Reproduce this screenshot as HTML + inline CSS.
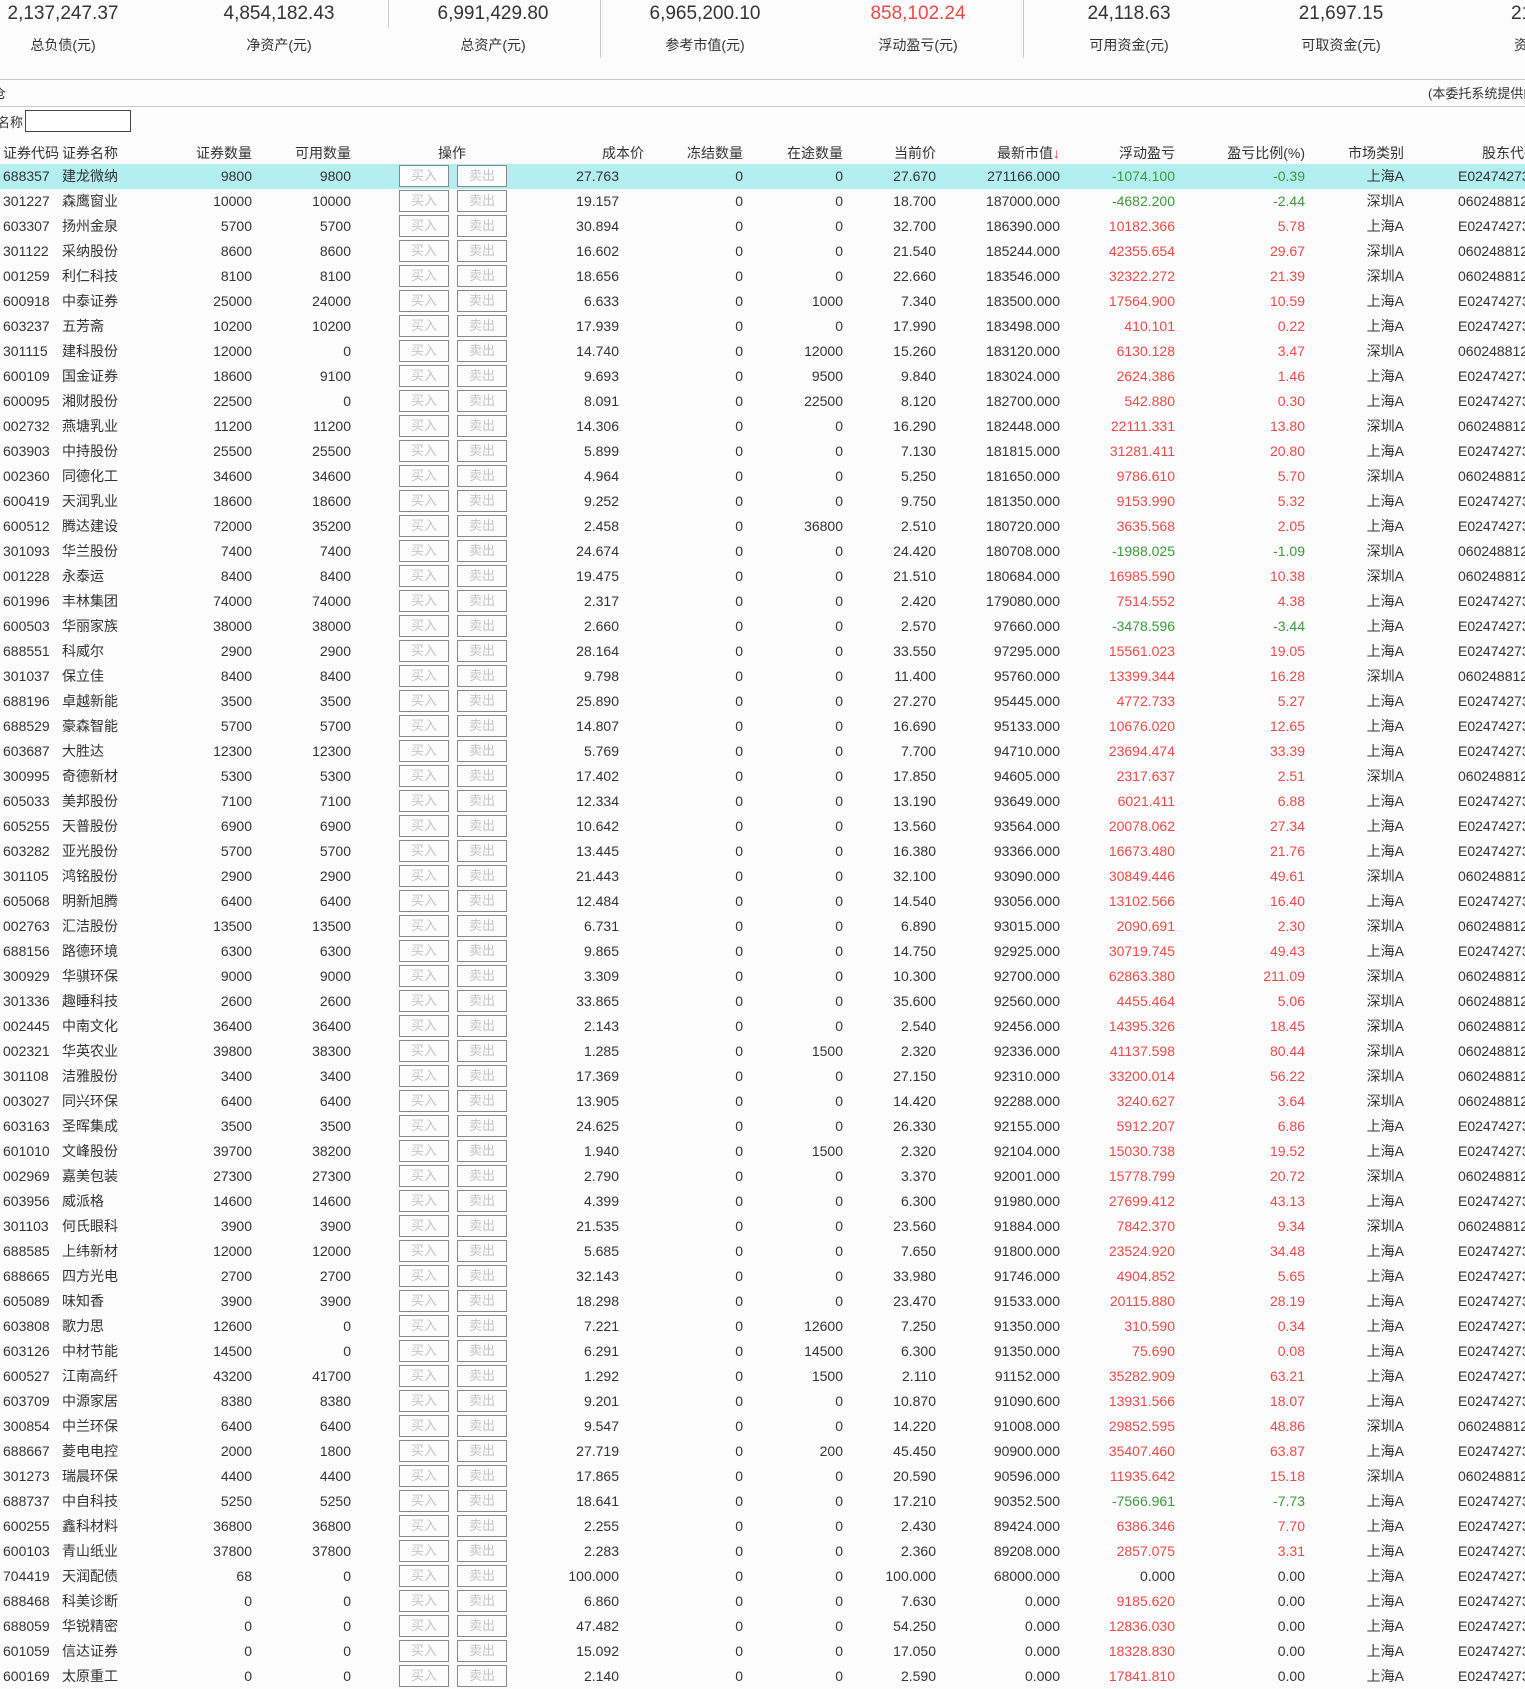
<!DOCTYPE html>
<html><head><meta charset="utf-8"><style>
*{margin:0;padding:0;box-sizing:border-box}
html{overflow:hidden;width:1525px;height:1689px}
body{width:1525px;height:1689px;overflow:hidden;background:#fcfcfc;font-family:"Liberation Sans","Noto Sans CJK SC",sans-serif;color:#333;position:relative;font-size:14px}
.top{position:absolute;width:212px;text-align:center}
.num{top:3px;font-size:19px;color:#333}
.lab{top:35px;font-size:14px}
.sep{position:absolute;width:1px;background:#ccc;top:0}
.hl{position:absolute;left:0;width:1525px;height:1px;background:#c8c8c8}
.abs{position:absolute;white-space:nowrap}
#hdr{position:absolute;top:141px;left:0;width:1525px;height:25px;line-height:25px;overflow:hidden}
#rows{position:absolute;top:164px;left:0;width:1525px;overflow:hidden}
.row{position:relative;height:25px;line-height:24px}
.row span,#hdr span{position:absolute;white-space:nowrap;text-align:right;width:100px}
.row span:nth-of-type(1),#hdr span:nth-of-type(1){left:3px;text-align:left}
.row span:nth-of-type(2),#hdr span:nth-of-type(2){left:62px;text-align:left}
.row span:nth-of-type(3),#hdr span:nth-of-type(3){left:152px}
.row span:nth-of-type(4),#hdr span:nth-of-type(4){left:251px}
.row span:nth-of-type(5){left:519px}
.row span:nth-of-type(6),#hdr span:nth-of-type(7){left:643px}
.row span:nth-of-type(7),#hdr span:nth-of-type(8){left:743px}
.row span:nth-of-type(8),#hdr span:nth-of-type(9){left:836px}
.row span:nth-of-type(9),#hdr span:nth-of-type(10){left:960px}
.row span:nth-of-type(10),#hdr span:nth-of-type(11){left:1075px}
.row span:nth-of-type(11),#hdr span:nth-of-type(12){left:1205px}
.row span:nth-of-type(12),#hdr span:nth-of-type(13){left:1304px}
.row span:nth-of-type(13){left:1458px;text-align:left;width:67px;overflow:hidden}
#hdr span:nth-of-type(5){left:402px;text-align:center}
#hdr span:nth-of-type(6){left:544px}
#hdr span:nth-of-type(14){left:1482px;text-align:left;width:43px;overflow:hidden}
.row b{position:absolute;top:1px;width:50px;height:22px;border:1px solid #888;background:#fcfcfc;color:#c4c4c4;font-weight:normal;font-size:13px;text-align:center;line-height:20px}
.row b:nth-of-type(1){left:399px}
.row b:nth-of-type(2){left:457px}
.g span:nth-of-type(10),.g span:nth-of-type(11){color:#3a9a3a}
.r span:nth-of-type(10),.r span:nth-of-type(11){color:#f04848}
.row span.k{color:#333!important}
.sel{background:#b3eff0}
</style></head><body>
<div class="top num" style="left:-43px">2,137,247.37</div><div class="top lab" style="left:-43px">总负债(元)</div>
<div class="top num" style="left:173px">4,854,182.43</div><div class="top lab" style="left:173px">净资产(元)</div>
<div class="top num" style="left:387px">6,991,429.80</div><div class="top lab" style="left:387px">总资产(元)</div>
<div class="top num" style="left:599px">6,965,200.10</div><div class="top lab" style="left:599px">参考市值(元)</div>
<div class="top num" style="left:812px;color:#f04848">858,102.24</div><div class="top lab" style="left:812px">浮动盈亏(元)</div>
<div class="top num" style="left:1023px">24,118.63</div><div class="top lab" style="left:1023px">可用资金(元)</div>
<div class="top num" style="left:1235px">21,697.15</div><div class="top lab" style="left:1235px">可取资金(元)</div>
<div class="abs" style="left:1511px;top:3px;font-size:19px;width:14px;overflow:hidden">21</div><div class="abs" style="left:1514px;top:35px;width:11px;overflow:hidden">资</div>
<div class="sep" style="left:388px;height:28px"></div>
<div class="sep" style="left:600px;height:58px"></div>
<div class="sep" style="left:1023px;height:58px"></div>
<div class="hl" style="top:79px"></div>
<div class="hl" style="top:106px"></div>
<div class="abs" style="left:-7px;top:83px;font-size:13px">仓</div>
<div class="abs" style="left:1428px;top:83px;font-size:13px;width:97px;overflow:hidden">(本委托系统提供的数据仅供参考)</div>
<div class="abs" style="left:-3px;top:112px;font-size:13px">名称</div>
<div class="abs" style="left:25px;top:110px;width:106px;height:22px;border:1px solid #444;background:#fff"></div>
<div id="hdr"><span>证券代码</span><span>证券名称</span><span>证券数量</span><span>可用数量</span><span>操作</span><span>成本价</span><span>冻结数量</span><span>在途数量</span><span>当前价</span><span>最新市值<i style="color:#e33;font-style:normal">↓</i></span><span>浮动盈亏</span><span>盈亏比例(%)</span><span>市场类别</span><span>股东代码</span></div>
<div id="rows">
<div class="row g sel"><span>688357</span><span>建龙微纳</span><span>9800</span><span>9800</span><b>买入</b><b>卖出</b><span>27.763</span><span>0</span><span>0</span><span>27.670</span><span>271166.000</span><span>-1074.100</span><span>-0.39</span><span>上海A</span><span>E024742737</span></div>
<div class="row g"><span>301227</span><span>森鹰窗业</span><span>10000</span><span>10000</span><b>买入</b><b>卖出</b><span>19.157</span><span>0</span><span>0</span><span>18.700</span><span>187000.000</span><span>-4682.200</span><span>-2.44</span><span>深圳A</span><span>0602488126</span></div>
<div class="row r"><span>603307</span><span>扬州金泉</span><span>5700</span><span>5700</span><b>买入</b><b>卖出</b><span>30.894</span><span>0</span><span>0</span><span>32.700</span><span>186390.000</span><span>10182.366</span><span>5.78</span><span>上海A</span><span>E024742737</span></div>
<div class="row r"><span>301122</span><span>采纳股份</span><span>8600</span><span>8600</span><b>买入</b><b>卖出</b><span>16.602</span><span>0</span><span>0</span><span>21.540</span><span>185244.000</span><span>42355.654</span><span>29.67</span><span>深圳A</span><span>0602488126</span></div>
<div class="row r"><span>001259</span><span>利仁科技</span><span>8100</span><span>8100</span><b>买入</b><b>卖出</b><span>18.656</span><span>0</span><span>0</span><span>22.660</span><span>183546.000</span><span>32322.272</span><span>21.39</span><span>深圳A</span><span>0602488126</span></div>
<div class="row r"><span>600918</span><span>中泰证券</span><span>25000</span><span>24000</span><b>买入</b><b>卖出</b><span>6.633</span><span>0</span><span>1000</span><span>7.340</span><span>183500.000</span><span>17564.900</span><span>10.59</span><span>上海A</span><span>E024742737</span></div>
<div class="row r"><span>603237</span><span>五芳斋</span><span>10200</span><span>10200</span><b>买入</b><b>卖出</b><span>17.939</span><span>0</span><span>0</span><span>17.990</span><span>183498.000</span><span>410.101</span><span>0.22</span><span>上海A</span><span>E024742737</span></div>
<div class="row r"><span>301115</span><span>建科股份</span><span>12000</span><span>0</span><b>买入</b><b>卖出</b><span>14.740</span><span>0</span><span>12000</span><span>15.260</span><span>183120.000</span><span>6130.128</span><span>3.47</span><span>深圳A</span><span>0602488126</span></div>
<div class="row r"><span>600109</span><span>国金证券</span><span>18600</span><span>9100</span><b>买入</b><b>卖出</b><span>9.693</span><span>0</span><span>9500</span><span>9.840</span><span>183024.000</span><span>2624.386</span><span>1.46</span><span>上海A</span><span>E024742737</span></div>
<div class="row r"><span>600095</span><span>湘财股份</span><span>22500</span><span>0</span><b>买入</b><b>卖出</b><span>8.091</span><span>0</span><span>22500</span><span>8.120</span><span>182700.000</span><span>542.880</span><span>0.30</span><span>上海A</span><span>E024742737</span></div>
<div class="row r"><span>002732</span><span>燕塘乳业</span><span>11200</span><span>11200</span><b>买入</b><b>卖出</b><span>14.306</span><span>0</span><span>0</span><span>16.290</span><span>182448.000</span><span>22111.331</span><span>13.80</span><span>深圳A</span><span>0602488126</span></div>
<div class="row r"><span>603903</span><span>中持股份</span><span>25500</span><span>25500</span><b>买入</b><b>卖出</b><span>5.899</span><span>0</span><span>0</span><span>7.130</span><span>181815.000</span><span>31281.411</span><span>20.80</span><span>上海A</span><span>E024742737</span></div>
<div class="row r"><span>002360</span><span>同德化工</span><span>34600</span><span>34600</span><b>买入</b><b>卖出</b><span>4.964</span><span>0</span><span>0</span><span>5.250</span><span>181650.000</span><span>9786.610</span><span>5.70</span><span>深圳A</span><span>0602488126</span></div>
<div class="row r"><span>600419</span><span>天润乳业</span><span>18600</span><span>18600</span><b>买入</b><b>卖出</b><span>9.252</span><span>0</span><span>0</span><span>9.750</span><span>181350.000</span><span>9153.990</span><span>5.32</span><span>上海A</span><span>E024742737</span></div>
<div class="row r"><span>600512</span><span>腾达建设</span><span>72000</span><span>35200</span><b>买入</b><b>卖出</b><span>2.458</span><span>0</span><span>36800</span><span>2.510</span><span>180720.000</span><span>3635.568</span><span>2.05</span><span>上海A</span><span>E024742737</span></div>
<div class="row g"><span>301093</span><span>华兰股份</span><span>7400</span><span>7400</span><b>买入</b><b>卖出</b><span>24.674</span><span>0</span><span>0</span><span>24.420</span><span>180708.000</span><span>-1988.025</span><span>-1.09</span><span>深圳A</span><span>0602488126</span></div>
<div class="row r"><span>001228</span><span>永泰运</span><span>8400</span><span>8400</span><b>买入</b><b>卖出</b><span>19.475</span><span>0</span><span>0</span><span>21.510</span><span>180684.000</span><span>16985.590</span><span>10.38</span><span>深圳A</span><span>0602488126</span></div>
<div class="row r"><span>601996</span><span>丰林集团</span><span>74000</span><span>74000</span><b>买入</b><b>卖出</b><span>2.317</span><span>0</span><span>0</span><span>2.420</span><span>179080.000</span><span>7514.552</span><span>4.38</span><span>上海A</span><span>E024742737</span></div>
<div class="row g"><span>600503</span><span>华丽家族</span><span>38000</span><span>38000</span><b>买入</b><b>卖出</b><span>2.660</span><span>0</span><span>0</span><span>2.570</span><span>97660.000</span><span>-3478.596</span><span>-3.44</span><span>上海A</span><span>E024742737</span></div>
<div class="row r"><span>688551</span><span>科威尔</span><span>2900</span><span>2900</span><b>买入</b><b>卖出</b><span>28.164</span><span>0</span><span>0</span><span>33.550</span><span>97295.000</span><span>15561.023</span><span>19.05</span><span>上海A</span><span>E024742737</span></div>
<div class="row r"><span>301037</span><span>保立佳</span><span>8400</span><span>8400</span><b>买入</b><b>卖出</b><span>9.798</span><span>0</span><span>0</span><span>11.400</span><span>95760.000</span><span>13399.344</span><span>16.28</span><span>深圳A</span><span>0602488126</span></div>
<div class="row r"><span>688196</span><span>卓越新能</span><span>3500</span><span>3500</span><b>买入</b><b>卖出</b><span>25.890</span><span>0</span><span>0</span><span>27.270</span><span>95445.000</span><span>4772.733</span><span>5.27</span><span>上海A</span><span>E024742737</span></div>
<div class="row r"><span>688529</span><span>豪森智能</span><span>5700</span><span>5700</span><b>买入</b><b>卖出</b><span>14.807</span><span>0</span><span>0</span><span>16.690</span><span>95133.000</span><span>10676.020</span><span>12.65</span><span>上海A</span><span>E024742737</span></div>
<div class="row r"><span>603687</span><span>大胜达</span><span>12300</span><span>12300</span><b>买入</b><b>卖出</b><span>5.769</span><span>0</span><span>0</span><span>7.700</span><span>94710.000</span><span>23694.474</span><span>33.39</span><span>上海A</span><span>E024742737</span></div>
<div class="row r"><span>300995</span><span>奇德新材</span><span>5300</span><span>5300</span><b>买入</b><b>卖出</b><span>17.402</span><span>0</span><span>0</span><span>17.850</span><span>94605.000</span><span>2317.637</span><span>2.51</span><span>深圳A</span><span>0602488126</span></div>
<div class="row r"><span>605033</span><span>美邦股份</span><span>7100</span><span>7100</span><b>买入</b><b>卖出</b><span>12.334</span><span>0</span><span>0</span><span>13.190</span><span>93649.000</span><span>6021.411</span><span>6.88</span><span>上海A</span><span>E024742737</span></div>
<div class="row r"><span>605255</span><span>天普股份</span><span>6900</span><span>6900</span><b>买入</b><b>卖出</b><span>10.642</span><span>0</span><span>0</span><span>13.560</span><span>93564.000</span><span>20078.062</span><span>27.34</span><span>上海A</span><span>E024742737</span></div>
<div class="row r"><span>603282</span><span>亚光股份</span><span>5700</span><span>5700</span><b>买入</b><b>卖出</b><span>13.445</span><span>0</span><span>0</span><span>16.380</span><span>93366.000</span><span>16673.480</span><span>21.76</span><span>上海A</span><span>E024742737</span></div>
<div class="row r"><span>301105</span><span>鸿铭股份</span><span>2900</span><span>2900</span><b>买入</b><b>卖出</b><span>21.443</span><span>0</span><span>0</span><span>32.100</span><span>93090.000</span><span>30849.446</span><span>49.61</span><span>深圳A</span><span>0602488126</span></div>
<div class="row r"><span>605068</span><span>明新旭腾</span><span>6400</span><span>6400</span><b>买入</b><b>卖出</b><span>12.484</span><span>0</span><span>0</span><span>14.540</span><span>93056.000</span><span>13102.566</span><span>16.40</span><span>上海A</span><span>E024742737</span></div>
<div class="row r"><span>002763</span><span>汇洁股份</span><span>13500</span><span>13500</span><b>买入</b><b>卖出</b><span>6.731</span><span>0</span><span>0</span><span>6.890</span><span>93015.000</span><span>2090.691</span><span>2.30</span><span>深圳A</span><span>0602488126</span></div>
<div class="row r"><span>688156</span><span>路德环境</span><span>6300</span><span>6300</span><b>买入</b><b>卖出</b><span>9.865</span><span>0</span><span>0</span><span>14.750</span><span>92925.000</span><span>30719.745</span><span>49.43</span><span>上海A</span><span>E024742737</span></div>
<div class="row r"><span>300929</span><span>华骐环保</span><span>9000</span><span>9000</span><b>买入</b><b>卖出</b><span>3.309</span><span>0</span><span>0</span><span>10.300</span><span>92700.000</span><span>62863.380</span><span>211.09</span><span>深圳A</span><span>0602488126</span></div>
<div class="row r"><span>301336</span><span>趣睡科技</span><span>2600</span><span>2600</span><b>买入</b><b>卖出</b><span>33.865</span><span>0</span><span>0</span><span>35.600</span><span>92560.000</span><span>4455.464</span><span>5.06</span><span>深圳A</span><span>0602488126</span></div>
<div class="row r"><span>002445</span><span>中南文化</span><span>36400</span><span>36400</span><b>买入</b><b>卖出</b><span>2.143</span><span>0</span><span>0</span><span>2.540</span><span>92456.000</span><span>14395.326</span><span>18.45</span><span>深圳A</span><span>0602488126</span></div>
<div class="row r"><span>002321</span><span>华英农业</span><span>39800</span><span>38300</span><b>买入</b><b>卖出</b><span>1.285</span><span>0</span><span>1500</span><span>2.320</span><span>92336.000</span><span>41137.598</span><span>80.44</span><span>深圳A</span><span>0602488126</span></div>
<div class="row r"><span>301108</span><span>洁雅股份</span><span>3400</span><span>3400</span><b>买入</b><b>卖出</b><span>17.369</span><span>0</span><span>0</span><span>27.150</span><span>92310.000</span><span>33200.014</span><span>56.22</span><span>深圳A</span><span>0602488126</span></div>
<div class="row r"><span>003027</span><span>同兴环保</span><span>6400</span><span>6400</span><b>买入</b><b>卖出</b><span>13.905</span><span>0</span><span>0</span><span>14.420</span><span>92288.000</span><span>3240.627</span><span>3.64</span><span>深圳A</span><span>0602488126</span></div>
<div class="row r"><span>603163</span><span>圣晖集成</span><span>3500</span><span>3500</span><b>买入</b><b>卖出</b><span>24.625</span><span>0</span><span>0</span><span>26.330</span><span>92155.000</span><span>5912.207</span><span>6.86</span><span>上海A</span><span>E024742737</span></div>
<div class="row r"><span>601010</span><span>文峰股份</span><span>39700</span><span>38200</span><b>买入</b><b>卖出</b><span>1.940</span><span>0</span><span>1500</span><span>2.320</span><span>92104.000</span><span>15030.738</span><span>19.52</span><span>上海A</span><span>E024742737</span></div>
<div class="row r"><span>002969</span><span>嘉美包装</span><span>27300</span><span>27300</span><b>买入</b><b>卖出</b><span>2.790</span><span>0</span><span>0</span><span>3.370</span><span>92001.000</span><span>15778.799</span><span>20.72</span><span>深圳A</span><span>0602488126</span></div>
<div class="row r"><span>603956</span><span>威派格</span><span>14600</span><span>14600</span><b>买入</b><b>卖出</b><span>4.399</span><span>0</span><span>0</span><span>6.300</span><span>91980.000</span><span>27699.412</span><span>43.13</span><span>上海A</span><span>E024742737</span></div>
<div class="row r"><span>301103</span><span>何氏眼科</span><span>3900</span><span>3900</span><b>买入</b><b>卖出</b><span>21.535</span><span>0</span><span>0</span><span>23.560</span><span>91884.000</span><span>7842.370</span><span>9.34</span><span>深圳A</span><span>0602488126</span></div>
<div class="row r"><span>688585</span><span>上纬新材</span><span>12000</span><span>12000</span><b>买入</b><b>卖出</b><span>5.685</span><span>0</span><span>0</span><span>7.650</span><span>91800.000</span><span>23524.920</span><span>34.48</span><span>上海A</span><span>E024742737</span></div>
<div class="row r"><span>688665</span><span>四方光电</span><span>2700</span><span>2700</span><b>买入</b><b>卖出</b><span>32.143</span><span>0</span><span>0</span><span>33.980</span><span>91746.000</span><span>4904.852</span><span>5.65</span><span>上海A</span><span>E024742737</span></div>
<div class="row r"><span>605089</span><span>味知香</span><span>3900</span><span>3900</span><b>买入</b><b>卖出</b><span>18.298</span><span>0</span><span>0</span><span>23.470</span><span>91533.000</span><span>20115.880</span><span>28.19</span><span>上海A</span><span>E024742737</span></div>
<div class="row r"><span>603808</span><span>歌力思</span><span>12600</span><span>0</span><b>买入</b><b>卖出</b><span>7.221</span><span>0</span><span>12600</span><span>7.250</span><span>91350.000</span><span>310.590</span><span>0.34</span><span>上海A</span><span>E024742737</span></div>
<div class="row r"><span>603126</span><span>中材节能</span><span>14500</span><span>0</span><b>买入</b><b>卖出</b><span>6.291</span><span>0</span><span>14500</span><span>6.300</span><span>91350.000</span><span>75.690</span><span>0.08</span><span>上海A</span><span>E024742737</span></div>
<div class="row r"><span>600527</span><span>江南高纤</span><span>43200</span><span>41700</span><b>买入</b><b>卖出</b><span>1.292</span><span>0</span><span>1500</span><span>2.110</span><span>91152.000</span><span>35282.909</span><span>63.21</span><span>上海A</span><span>E024742737</span></div>
<div class="row r"><span>603709</span><span>中源家居</span><span>8380</span><span>8380</span><b>买入</b><b>卖出</b><span>9.201</span><span>0</span><span>0</span><span>10.870</span><span>91090.600</span><span>13931.566</span><span>18.07</span><span>上海A</span><span>E024742737</span></div>
<div class="row r"><span>300854</span><span>中兰环保</span><span>6400</span><span>6400</span><b>买入</b><b>卖出</b><span>9.547</span><span>0</span><span>0</span><span>14.220</span><span>91008.000</span><span>29852.595</span><span>48.86</span><span>深圳A</span><span>0602488126</span></div>
<div class="row r"><span>688667</span><span>菱电电控</span><span>2000</span><span>1800</span><b>买入</b><b>卖出</b><span>27.719</span><span>0</span><span>200</span><span>45.450</span><span>90900.000</span><span>35407.460</span><span>63.87</span><span>上海A</span><span>E024742737</span></div>
<div class="row r"><span>301273</span><span>瑞晨环保</span><span>4400</span><span>4400</span><b>买入</b><b>卖出</b><span>17.865</span><span>0</span><span>0</span><span>20.590</span><span>90596.000</span><span>11935.642</span><span>15.18</span><span>深圳A</span><span>0602488126</span></div>
<div class="row g"><span>688737</span><span>中自科技</span><span>5250</span><span>5250</span><b>买入</b><b>卖出</b><span>18.641</span><span>0</span><span>0</span><span>17.210</span><span>90352.500</span><span>-7566.961</span><span>-7.73</span><span>上海A</span><span>E024742737</span></div>
<div class="row r"><span>600255</span><span>鑫科材料</span><span>36800</span><span>36800</span><b>买入</b><b>卖出</b><span>2.255</span><span>0</span><span>0</span><span>2.430</span><span>89424.000</span><span>6386.346</span><span>7.70</span><span>上海A</span><span>E024742737</span></div>
<div class="row r"><span>600103</span><span>青山纸业</span><span>37800</span><span>37800</span><b>买入</b><b>卖出</b><span>2.283</span><span>0</span><span>0</span><span>2.360</span><span>89208.000</span><span>2857.075</span><span>3.31</span><span>上海A</span><span>E024742737</span></div>
<div class="row"><span>704419</span><span>天润配债</span><span>68</span><span>0</span><b>买入</b><b>卖出</b><span>100.000</span><span>0</span><span>0</span><span>100.000</span><span>68000.000</span><span>0.000</span><span>0.00</span><span>上海A</span><span>E024742737</span></div>
<div class="row r"><span>688468</span><span>科美诊断</span><span>0</span><span>0</span><b>买入</b><b>卖出</b><span>6.860</span><span>0</span><span>0</span><span>7.630</span><span>0.000</span><span>9185.620</span><span class="k">0.00</span><span>上海A</span><span>E024742737</span></div>
<div class="row r"><span>688059</span><span>华锐精密</span><span>0</span><span>0</span><b>买入</b><b>卖出</b><span>47.482</span><span>0</span><span>0</span><span>54.250</span><span>0.000</span><span>12836.030</span><span class="k">0.00</span><span>上海A</span><span>E024742737</span></div>
<div class="row r"><span>601059</span><span>信达证券</span><span>0</span><span>0</span><b>买入</b><b>卖出</b><span>15.092</span><span>0</span><span>0</span><span>17.050</span><span>0.000</span><span>18328.830</span><span class="k">0.00</span><span>上海A</span><span>E024742737</span></div>
<div class="row r"><span>600169</span><span>太原重工</span><span>0</span><span>0</span><b>买入</b><b>卖出</b><span>2.140</span><span>0</span><span>0</span><span>2.590</span><span>0.000</span><span>17841.810</span><span class="k">0.00</span><span>上海A</span><span>E024742737</span></div>
</div>
</body></html>
